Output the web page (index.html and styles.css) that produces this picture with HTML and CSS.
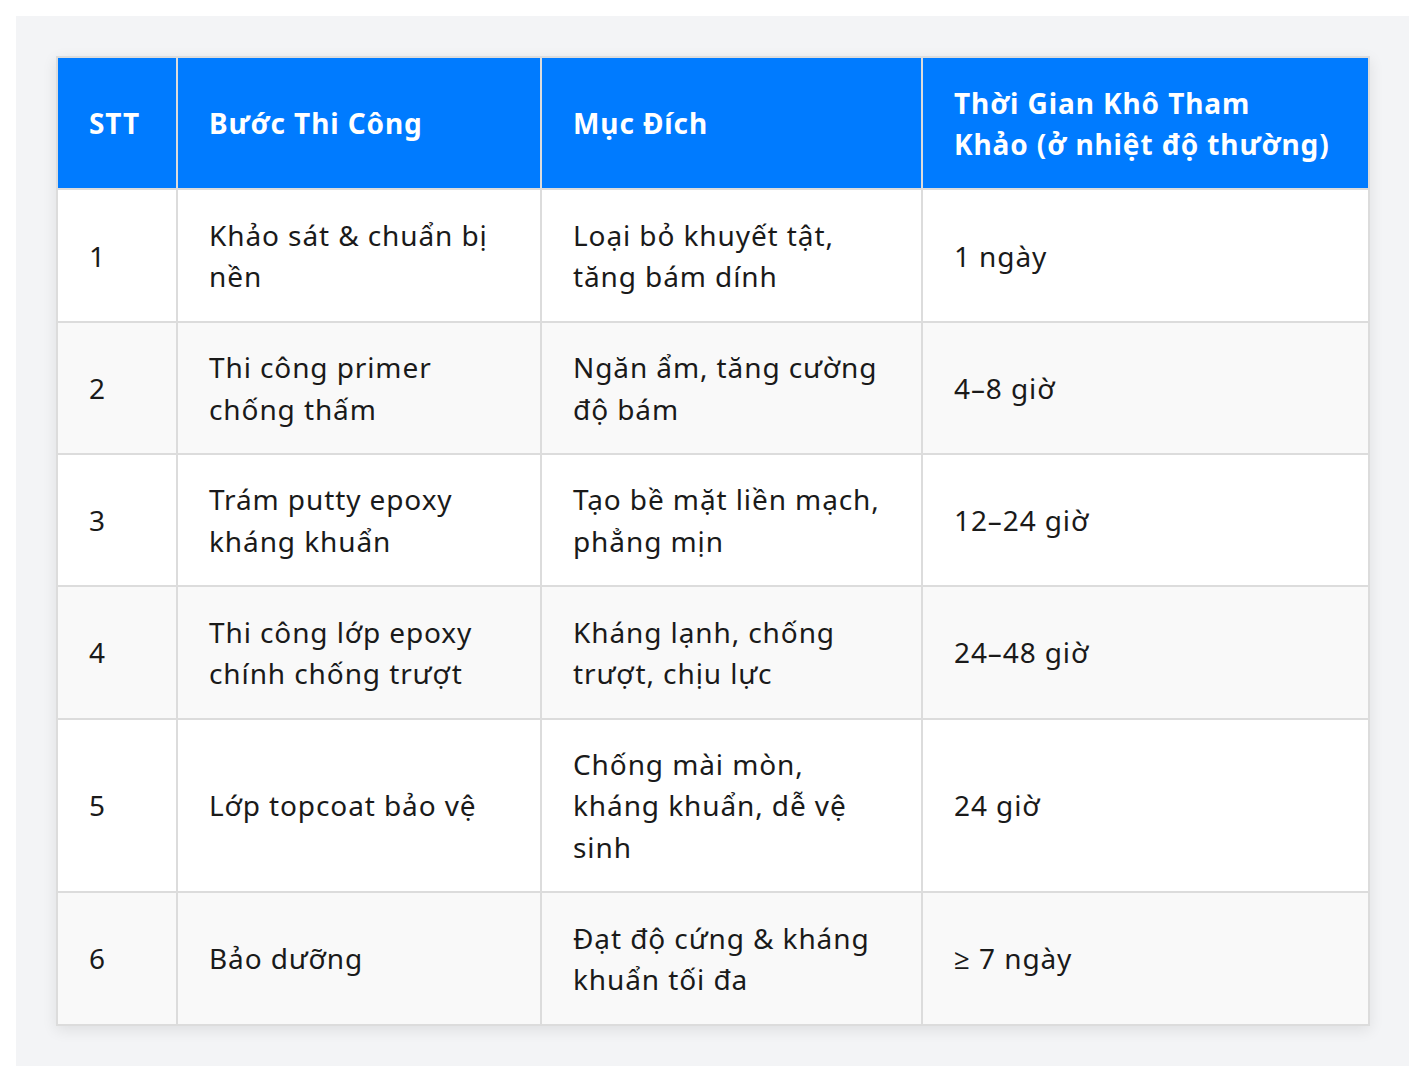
FILE: index.html
```html
<!DOCTYPE html>
<html lang="vi">
<head>
<meta charset="utf-8">
<title>Quy trình thi công</title>
<link rel="stylesheet" href="styles.css">
</head>
<body>
<div class="page">
  <table class="steps">
    <colgroup>
      <col class="c-stt">
      <col class="c-step">
      <col class="c-goal">
      <col class="c-time">
    </colgroup>
    <thead>
      <tr>
        <th>STT</th>
        <th>Bước Thi Công</th>
        <th>Mục Đích</th>
        <th>Thời Gian Khô Tham<br>Khảo (ở nhiệt độ thường)</th>
      </tr>
    </thead>
    <tbody>
      <tr>
        <td>1</td>
        <td>Khảo sát &amp; chuẩn bị<br>nền</td>
        <td>Loại bỏ khuyết tật,<br>tăng bám dính</td>
        <td>1 ngày</td>
      </tr>
      <tr>
        <td>2</td>
        <td>Thi công primer<br>chống thấm</td>
        <td>Ngăn ẩm, tăng cường<br>độ bám</td>
        <td>4–8 giờ</td>
      </tr>
      <tr>
        <td>3</td>
        <td>Trám putty epoxy<br>kháng khuẩn</td>
        <td>Tạo bề mặt liền mạch,<br>phẳng mịn</td>
        <td>12–24 giờ</td>
      </tr>
      <tr>
        <td>4</td>
        <td>Thi công lớp epoxy<br>chính chống trượt</td>
        <td>Kháng lạnh, chống<br>trượt, chịu lực</td>
        <td>24–48 giờ</td>
      </tr>
      <tr>
        <td>5</td>
        <td>Lớp topcoat bảo vệ</td>
        <td>Chống mài mòn,<br>kháng khuẩn, dễ vệ<br>sinh</td>
        <td>24 giờ</td>
      </tr>
      <tr>
        <td>6</td>
        <td>Bảo dưỡng</td>
        <td>Đạt độ cứng &amp; kháng<br>khuẩn tối đa</td>
        <td>≥ 7 ngày</td>
      </tr>
    </tbody>
  </table>
</div>
</body>
</html>
```

FILE: styles.css
```css
html, body {
  margin: 0;
  padding: 0;
  background: #ffffff;
}

body {
  padding: 16px;
  font-family: "Noto Sans", "Open Sans", "DejaVu Sans", sans-serif;
  color: #1a1a1a;
}

.page {
  background: #f3f4f6;
  padding: 40px 41px 40px 40px;
}

.steps {
  width: 1312px;
  border-collapse: collapse;
  table-layout: fixed;
  background: #ffffff;
  box-shadow: 0 4px 14px rgba(0, 0, 0, 0.09);
  font-size: 28px;
  letter-spacing: 0.9px;
  line-height: 41.4px;
}

.c-stt { width: 120px; }
.c-step { width: 364px; }
.c-goal { width: 381px; }
.c-time { width: 447px; }

.steps th,
.steps td {
  border: 2px solid #dcdcdc;
  padding: 24.5px 8px 23px 31px;
  text-align: left;
  vertical-align: middle;
}

.steps th {
  background: #007bff;
  color: #ffffff;
  font-weight: 700;
  letter-spacing: 0.9px;
}

.steps tbody tr:nth-child(even) td {
  background: #f9f9f9;
}
```
